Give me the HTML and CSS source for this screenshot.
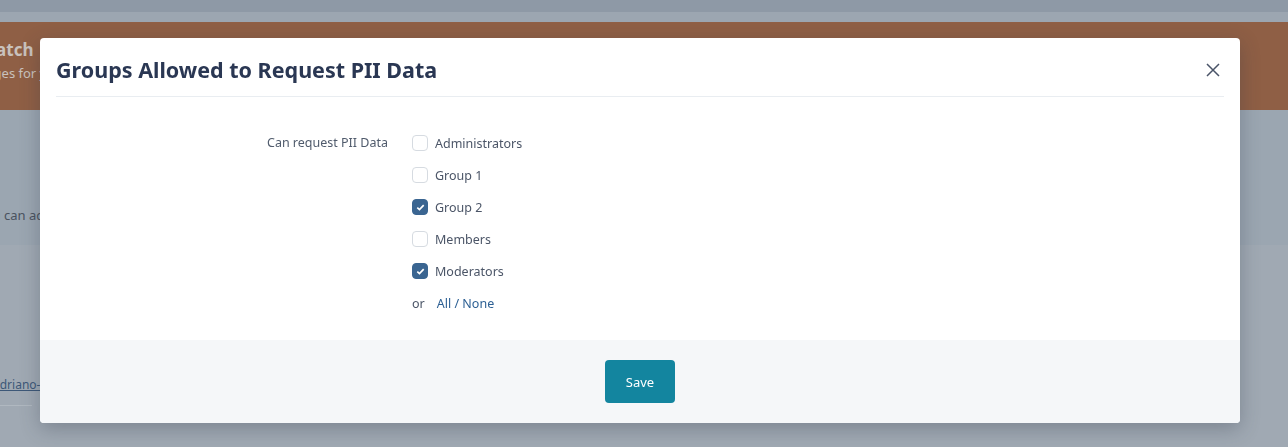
FILE: index.html
```html
<!DOCTYPE html>
<html lang="en">
  <head>
    <meta charset="UTF-8" />
    <meta name="viewport" content="width=device-width, initial-scale=1.0" />
    <title>Groups Allowed to Request PII Data</title>
    <link rel="stylesheet" href="styles.css">
  </head>
  <body>
    <div class="page">
      <div class="top-bar"></div>
      <div class="sub-bar"></div>
      <div class="banner">
        <div class="banner-title">Watch</div>
        <div class="banner-text">Changes for you</div>
      </div>
      <div class="section">
        <p class="section-text">You can add</p>
      </div>
      <div class="section lower">
        <a class="user-link" href="#">adriano-t</a>
        <div class="rule"></div>
      </div>
    </div>

    <div class="backdrop">
      <div class="modal">
        <div class="modal-header">
          <h2>Groups Allowed to Request PII Data</h2>
          <button class="close-btn" aria-label="Close">
            <svg width="14" height="14" viewBox="0 0 14 14">
              <path d="M1 1 L13 13 M13 1 L1 13" stroke="#4a5468" stroke-width="1.5" fill="none" />
            </svg>
          </button>
        </div>

        <div class="modal-body">
          <div class="field-label">Can request PII Data</div>
          <div class="options">
            <label class="option"><span class="box"></span>Administrators</label>
            <label class="option"><span class="box"></span>Group 1</label>
            <label class="option"><span class="box checked"><svg width="9" height="9" viewBox="0 0 9 9"><path d="M1.3 4.6 L3.5 6.6 L7.7 2.2" stroke="#fff" stroke-width="1.7" fill="none" /></svg></span>Group 2</label>
            <label class="option"><span class="box"></span>Members</label>
            <label class="option"><span class="box checked"><svg width="9" height="9" viewBox="0 0 9 9"><path d="M1.3 4.6 L3.5 6.6 L7.7 2.2" stroke="#fff" stroke-width="1.7" fill="none" /></svg></span>Moderators</label>
            <div class="option select-all">or<span class="links"><a href="#">All</a> / <a href="#">None</a></span></div>
          </div>
        </div>

        <div class="modal-footer">
          <button class="save-btn">Save</button>
        </div>
      </div>
    </div>
  </body>
</html>
```

FILE: styles.css
```css
* {
    box-sizing: border-box;
}

body {
    margin: 0;
    font-family: "Noto Sans", "Open Sans", sans-serif;
    background: #a0a9b3;
    overflow: hidden;
}

.page {
    height: 447px;
}

.top-bar {
    height: 12px;
    background: #8e99a6;
}

.sub-bar {
    height: 10px;
    background: #9ca6b1;
}

.banner {
    height: 88px;
    background: #8f5f45;
    padding-top: 16px;
    margin-left: -20px;
    color: #c9c2bd;
}

.banner-title {
    font-size: 17px;
    font-weight: 700;
    line-height: 24px;
}

.banner-text {
    font-size: 13px;
    line-height: 22px;
    margin-left: -18px;
}

.section {
    height: 135px;
    background: #9ba6b1;
    padding-top: 96px;
}

.section-text {
    margin: 0 0 0 -22px;
    font-size: 13px;
    color: #4a5360;
}

.section.lower {
    height: 202px;
    background: #a0a9b3;
    padding-top: 131px;
}

.user-link {
    display: block;
    margin-left: -7px;
    font-size: 12px;
    color: #3d5878;
}

.rule {
    width: 32px;
    height: 1px;
    margin-top: 12px;
    background: #b0b8c0;
}

.backdrop {
    position: fixed;
    top: 0;
    left: 0;
    right: 0;
    bottom: 0;
    padding: 38px 48px 0 40px;
}

.modal {
    background: #fff;
    border-radius: 4px;
    overflow: hidden;
    box-shadow: 0 6px 20px rgba(40, 50, 65, 0.3);
}

.modal-header {
    display: flex;
    align-items: center;
    justify-content: space-between;
    margin: 0 16px;
    padding: 18px 0 12px;
    border-bottom: 1px solid #e9edf1;
}

.modal-header h2 {
    margin: 0;
    font-size: 21.5px;
    line-height: 28px;
    font-weight: 700;
    color: #2a3753;
}

.close-btn {
    border: none;
    background: none;
    padding: 0;
    margin-right: 4px;
    display: flex;
    cursor: pointer;
}

.modal-body {
    display: grid;
    grid-template-columns: 372px 1fr;
    padding: 30px 0 21px;
    font-size: 12.5px;
    color: #4b5567;
}

.field-label {
    text-align: right;
    padding-right: 24px;
    line-height: 32px;
    color: #505b6c;
}

.options {
    display: flex;
    flex-direction: column;
}

.option {
    display: flex;
    align-items: center;
    height: 32px;
}

.box {
    width: 16px;
    height: 16px;
    border: 1px solid #d6dbe1;
    border-radius: 4px;
    margin-right: 7px;
    display: grid;
    place-items: center;
    background: #fff;
}

.box.checked {
    background: #3a6591;
    border-color: #3a6591;
}

.links {
    margin-left: 12px;
    color: #2c5f93;
    white-space: pre;
}

.links a {
    color: #2c5f93;
    text-decoration: none;
}

.modal-footer {
    background: #f5f7f9;
    padding: 20px 0;
    display: flex;
    justify-content: center;
}

.save-btn {
    border: none;
    border-radius: 4px;
    background: #13859f;
    color: #fff;
    font-family: inherit;
    font-size: 13px;
    width: 70px;
    height: 43px;
    cursor: pointer;
}
```
